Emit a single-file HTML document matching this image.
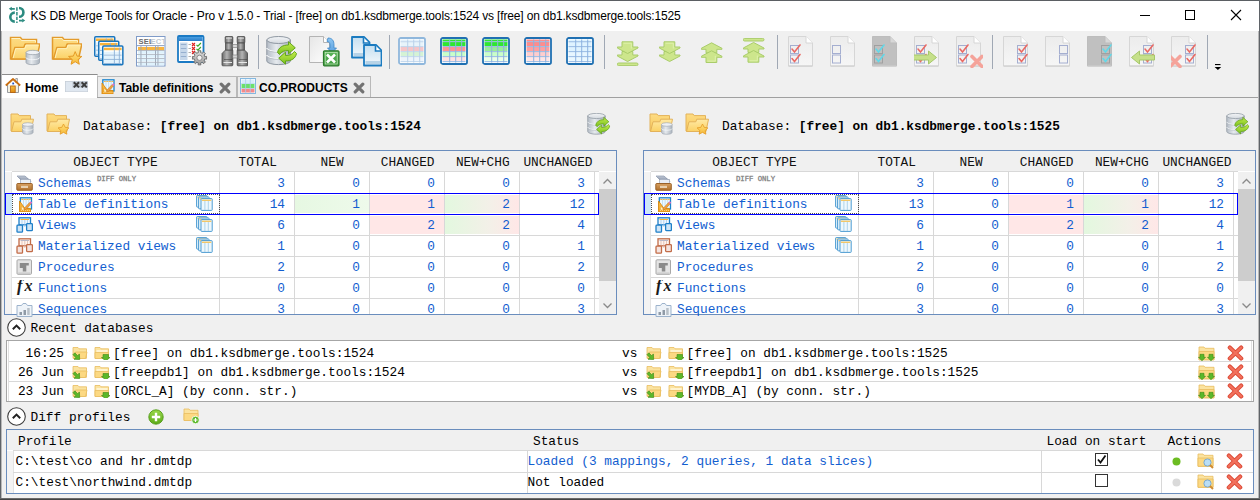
<!DOCTYPE html>
<html><head><meta charset="utf-8"><style>
html,body{margin:0;padding:0;}
body{width:1260px;height:500px;overflow:hidden;background:#f0f0f0;position:relative;font-family:"Liberation Sans",sans-serif;}
.t{position:absolute;white-space:pre;}
.r{position:absolute;}
</style></head><body>
<div class="r" style="left:0px;top:0px;width:1260px;height:31px;background:#ffffff;"></div>
<div class="t" style="left:30.5px;top:10.44px;font-family:'Liberation Sans', sans-serif;font-size:12px;line-height:13.406px;color:#000;-webkit-text-stroke:0;letter-spacing:-0.155px;">KS DB Merge Tools for Oracle - Pro v 1.5.0 - Trial - [free] on db1.ksdbmerge.tools:1524 vs [free] on db1.ksdbmerge.tools:1525</div>
<div class="r" style="left:1140px;top:15px;width:10px;height:1px;background:#000;"></div>
<div class="r" style="left:1185px;top:10px;width:10px;height:10px;background:transparent;border:1px solid #000;box-sizing:border-box;"></div>
<svg class="r" style="left:1230px;top:9px" width="12" height="12" viewBox="0 0 12 12"><path d="M1 1L11 11M11 1L1 11" stroke="#000" stroke-width="1.1"/></svg>
<div class="r" style="left:2px;top:74px;width:96px;height:24px;background:#ffffff;border-top:1px solid #8c8c8c;border-right:1px solid #d9d9d9;box-sizing:border-box;"></div>
<div class="r" style="left:97px;top:76px;width:140px;height:22px;background:#ececec;border:1px solid #b9b9b9;border-bottom:none;box-sizing:border-box;"></div>
<div class="r" style="left:237px;top:76px;width:134px;height:22px;background:#ececec;border:1px solid #b9b9b9;border-bottom:none;box-sizing:border-box;"></div>
<div class="r" style="left:97px;top:97px;width:1161px;height:1px;background:#a0a0a0;"></div>
<div class="t" style="left:25px;top:81.74px;font-family:'Liberation Sans', sans-serif;font-size:12px;line-height:13.406px;color:#000;-webkit-text-stroke:0;font-weight:700;">Home</div>
<div class="t" style="left:119px;top:81.74px;font-family:'Liberation Sans', sans-serif;font-size:12px;line-height:13.406px;color:#000;-webkit-text-stroke:0;font-weight:700;">Table definitions</div>
<div class="t" style="left:259px;top:81.74px;font-family:'Liberation Sans', sans-serif;font-size:12px;line-height:13.406px;color:#000;-webkit-text-stroke:0;font-weight:700;">CO.PRODUCTS</div>
<div class="r" style="left:4px;top:150px;width:613px;height:165px;background:#ffffff;border:1px solid #6a8dbd;box-sizing:border-box;"></div>
<div class="r" style="left:5px;top:151px;width:611px;height:20px;background:#f0f0f0;"></div>
<div class="r" style="left:12px;top:171px;width:587px;height:1px;background:#d8d8d8;"></div>
<div class="r" style="left:5px;top:172px;width:7px;height:142px;background:#f3f3f3;"></div>
<div class="r" style="left:11px;top:172px;width:1px;height:142px;background:#e3e3e3;"></div>
<div class="t" style="left:45.5px;width:140px;text-align:center;top:156.14px;font-family:'Liberation Mono', monospace;font-size:12.8px;line-height:14.500px;color:#111;">OBJECT TYPE</div>
<div class="t" style="left:187.7px;width:140px;text-align:center;top:156.14px;font-family:'Liberation Mono', monospace;font-size:12.8px;line-height:14.500px;color:#111;">TOTAL</div>
<div class="t" style="left:262.1px;width:140px;text-align:center;top:156.14px;font-family:'Liberation Mono', monospace;font-size:12.8px;line-height:14.500px;color:#111;">NEW</div>
<div class="t" style="left:337.7px;width:140px;text-align:center;top:156.14px;font-family:'Liberation Mono', monospace;font-size:12.8px;line-height:14.500px;color:#111;">CHANGED</div>
<div class="t" style="left:412.8px;width:140px;text-align:center;top:156.14px;font-family:'Liberation Mono', monospace;font-size:12.8px;line-height:14.500px;color:#111;">NEW+CHG</div>
<div class="t" style="left:488.0px;width:140px;text-align:center;top:156.14px;font-family:'Liberation Mono', monospace;font-size:12.8px;line-height:14.500px;color:#111;">UNCHANGED</div>
<div class="r" style="left:12px;top:193px;width:587px;height:1px;background:#d8d8d8;"></div>
<div class="r" style="left:12px;top:214px;width:587px;height:1px;background:#d8d8d8;"></div>
<div class="r" style="left:12px;top:235px;width:587px;height:1px;background:#d8d8d8;"></div>
<div class="r" style="left:12px;top:256px;width:587px;height:1px;background:#d8d8d8;"></div>
<div class="r" style="left:12px;top:277px;width:587px;height:1px;background:#d8d8d8;"></div>
<div class="r" style="left:12px;top:298px;width:587px;height:1px;background:#d8d8d8;"></div>
<div class="r" style="left:219px;top:172px;width:1px;height:142px;background:#d8d8d8;"></div>
<div class="r" style="left:294px;top:172px;width:1px;height:142px;background:#d8d8d8;"></div>
<div class="r" style="left:369px;top:172px;width:1px;height:142px;background:#d8d8d8;"></div>
<div class="r" style="left:444px;top:172px;width:1px;height:142px;background:#d8d8d8;"></div>
<div class="r" style="left:519px;top:172px;width:1px;height:142px;background:#d8d8d8;"></div>
<div class="r" style="left:594px;top:172px;width:1px;height:142px;background:#d8d8d8;"></div>
<div class="t" style="left:38px;top:177.34px;font-family:'Liberation Mono', monospace;font-size:12.8px;line-height:14.500px;color:#125ed0;">Schemas</div>
<div class="t" style="left:225px;width:60px;text-align:right;top:177.34px;font-family:'Liberation Mono', monospace;font-size:12.8px;line-height:14.500px;color:#125ed0;">3</div>
<div class="t" style="left:300px;width:60px;text-align:right;top:177.34px;font-family:'Liberation Mono', monospace;font-size:12.8px;line-height:14.500px;color:#125ed0;">0</div>
<div class="t" style="left:375px;width:60px;text-align:right;top:177.34px;font-family:'Liberation Mono', monospace;font-size:12.8px;line-height:14.500px;color:#125ed0;">0</div>
<div class="t" style="left:450px;width:60px;text-align:right;top:177.34px;font-family:'Liberation Mono', monospace;font-size:12.8px;line-height:14.500px;color:#125ed0;">0</div>
<div class="t" style="left:525px;width:60px;text-align:right;top:177.34px;font-family:'Liberation Mono', monospace;font-size:12.8px;line-height:14.500px;color:#125ed0;">3</div>
<div class="r" style="left:295px;top:195px;width:74px;height:18px;background:linear-gradient(90deg,#e6f8e2,#eefaeb);"></div>
<div class="r" style="left:370px;top:195px;width:74px;height:18px;background:#ffe7e7;"></div>
<div class="r" style="left:445px;top:195px;width:74px;height:18px;background:linear-gradient(90deg,#e3f8df,#f3f0e8 60%,#ffe7e7);"></div>
<div class="t" style="left:38px;top:198.34px;font-family:'Liberation Mono', monospace;font-size:12.8px;line-height:14.500px;color:#125ed0;">Table definitions</div>
<div class="t" style="left:225px;width:60px;text-align:right;top:198.34px;font-family:'Liberation Mono', monospace;font-size:12.8px;line-height:14.500px;color:#125ed0;">14</div>
<div class="t" style="left:300px;width:60px;text-align:right;top:198.34px;font-family:'Liberation Mono', monospace;font-size:12.8px;line-height:14.500px;color:#125ed0;">1</div>
<div class="t" style="left:375px;width:60px;text-align:right;top:198.34px;font-family:'Liberation Mono', monospace;font-size:12.8px;line-height:14.500px;color:#125ed0;">1</div>
<div class="t" style="left:450px;width:60px;text-align:right;top:198.34px;font-family:'Liberation Mono', monospace;font-size:12.8px;line-height:14.500px;color:#125ed0;">2</div>
<div class="t" style="left:525px;width:60px;text-align:right;top:198.34px;font-family:'Liberation Mono', monospace;font-size:12.8px;line-height:14.500px;color:#125ed0;">12</div>
<div class="r" style="left:370px;top:216px;width:74px;height:18px;background:#ffe7e7;"></div>
<div class="r" style="left:445px;top:216px;width:74px;height:18px;background:linear-gradient(90deg,#e3f8df,#f3f0e8 60%,#ffe7e7);"></div>
<div class="t" style="left:38px;top:219.34px;font-family:'Liberation Mono', monospace;font-size:12.8px;line-height:14.500px;color:#125ed0;">Views</div>
<div class="t" style="left:225px;width:60px;text-align:right;top:219.34px;font-family:'Liberation Mono', monospace;font-size:12.8px;line-height:14.500px;color:#125ed0;">6</div>
<div class="t" style="left:300px;width:60px;text-align:right;top:219.34px;font-family:'Liberation Mono', monospace;font-size:12.8px;line-height:14.500px;color:#125ed0;">0</div>
<div class="t" style="left:375px;width:60px;text-align:right;top:219.34px;font-family:'Liberation Mono', monospace;font-size:12.8px;line-height:14.500px;color:#125ed0;">2</div>
<div class="t" style="left:450px;width:60px;text-align:right;top:219.34px;font-family:'Liberation Mono', monospace;font-size:12.8px;line-height:14.500px;color:#125ed0;">2</div>
<div class="t" style="left:525px;width:60px;text-align:right;top:219.34px;font-family:'Liberation Mono', monospace;font-size:12.8px;line-height:14.500px;color:#125ed0;">4</div>
<div class="t" style="left:38px;top:240.34px;font-family:'Liberation Mono', monospace;font-size:12.8px;line-height:14.500px;color:#125ed0;">Materialized views</div>
<div class="t" style="left:225px;width:60px;text-align:right;top:240.34px;font-family:'Liberation Mono', monospace;font-size:12.8px;line-height:14.500px;color:#125ed0;">1</div>
<div class="t" style="left:300px;width:60px;text-align:right;top:240.34px;font-family:'Liberation Mono', monospace;font-size:12.8px;line-height:14.500px;color:#125ed0;">0</div>
<div class="t" style="left:375px;width:60px;text-align:right;top:240.34px;font-family:'Liberation Mono', monospace;font-size:12.8px;line-height:14.500px;color:#125ed0;">0</div>
<div class="t" style="left:450px;width:60px;text-align:right;top:240.34px;font-family:'Liberation Mono', monospace;font-size:12.8px;line-height:14.500px;color:#125ed0;">0</div>
<div class="t" style="left:525px;width:60px;text-align:right;top:240.34px;font-family:'Liberation Mono', monospace;font-size:12.8px;line-height:14.500px;color:#125ed0;">1</div>
<div class="t" style="left:38px;top:261.34px;font-family:'Liberation Mono', monospace;font-size:12.8px;line-height:14.500px;color:#125ed0;">Procedures</div>
<div class="t" style="left:225px;width:60px;text-align:right;top:261.34px;font-family:'Liberation Mono', monospace;font-size:12.8px;line-height:14.500px;color:#125ed0;">2</div>
<div class="t" style="left:300px;width:60px;text-align:right;top:261.34px;font-family:'Liberation Mono', monospace;font-size:12.8px;line-height:14.500px;color:#125ed0;">0</div>
<div class="t" style="left:375px;width:60px;text-align:right;top:261.34px;font-family:'Liberation Mono', monospace;font-size:12.8px;line-height:14.500px;color:#125ed0;">0</div>
<div class="t" style="left:450px;width:60px;text-align:right;top:261.34px;font-family:'Liberation Mono', monospace;font-size:12.8px;line-height:14.500px;color:#125ed0;">0</div>
<div class="t" style="left:525px;width:60px;text-align:right;top:261.34px;font-family:'Liberation Mono', monospace;font-size:12.8px;line-height:14.500px;color:#125ed0;">2</div>
<div class="t" style="left:38px;top:282.34px;font-family:'Liberation Mono', monospace;font-size:12.8px;line-height:14.500px;color:#125ed0;">Functions</div>
<div class="t" style="left:225px;width:60px;text-align:right;top:282.34px;font-family:'Liberation Mono', monospace;font-size:12.8px;line-height:14.500px;color:#125ed0;">0</div>
<div class="t" style="left:300px;width:60px;text-align:right;top:282.34px;font-family:'Liberation Mono', monospace;font-size:12.8px;line-height:14.500px;color:#125ed0;">0</div>
<div class="t" style="left:375px;width:60px;text-align:right;top:282.34px;font-family:'Liberation Mono', monospace;font-size:12.8px;line-height:14.500px;color:#125ed0;">0</div>
<div class="t" style="left:450px;width:60px;text-align:right;top:282.34px;font-family:'Liberation Mono', monospace;font-size:12.8px;line-height:14.500px;color:#125ed0;">0</div>
<div class="t" style="left:525px;width:60px;text-align:right;top:282.34px;font-family:'Liberation Mono', monospace;font-size:12.8px;line-height:14.500px;color:#125ed0;">0</div>
<div class="t" style="left:38px;top:303.34px;font-family:'Liberation Mono', monospace;font-size:12.8px;line-height:14.500px;color:#125ed0;">Sequences</div>
<div class="t" style="left:225px;width:60px;text-align:right;top:303.34px;font-family:'Liberation Mono', monospace;font-size:12.8px;line-height:14.500px;color:#125ed0;">3</div>
<div class="t" style="left:300px;width:60px;text-align:right;top:303.34px;font-family:'Liberation Mono', monospace;font-size:12.8px;line-height:14.500px;color:#125ed0;">0</div>
<div class="t" style="left:375px;width:60px;text-align:right;top:303.34px;font-family:'Liberation Mono', monospace;font-size:12.8px;line-height:14.500px;color:#125ed0;">0</div>
<div class="t" style="left:450px;width:60px;text-align:right;top:303.34px;font-family:'Liberation Mono', monospace;font-size:12.8px;line-height:14.500px;color:#125ed0;">0</div>
<div class="t" style="left:525px;width:60px;text-align:right;top:303.34px;font-family:'Liberation Mono', monospace;font-size:12.8px;line-height:14.500px;color:#125ed0;">3</div>
<div class="r" style="left:5px;top:194px;width:7px;height:20px;background:#cde6f7;"></div>
<div class="r" style="left:12px;top:194px;width:208px;height:20px;background:transparent;border:1px dotted #505050;box-sizing:border-box;"></div>
<div class="r" style="left:5px;top:193px;width:594px;height:22px;background:transparent;border:1px solid #0000ff;box-sizing:border-box;"></div>
<div class="r" style="left:599px;top:172px;width:17px;height:142px;background:#f0f0f0;"></div>
<div class="r" style="left:599px;top:189px;width:17px;height:92px;background:#cdcdcd;"></div>
<svg class="r" style="left:599px;top:177px" width="17" height="8" viewBox="0 0 17 8"><path d="M4.5 6.5l4-4 4 4" fill="none" stroke="#8a8a8a" stroke-width="1.3"/></svg>
<svg class="r" style="left:599px;top:302px" width="17" height="8" viewBox="0 0 17 8"><path d="M4.5 1.5l4 4 4-4" fill="none" stroke="#8a8a8a" stroke-width="1.3"/></svg>
<div class="r" style="left:643px;top:150px;width:613px;height:165px;background:#ffffff;border:1px solid #6a8dbd;box-sizing:border-box;"></div>
<div class="r" style="left:644px;top:151px;width:611px;height:20px;background:#f0f0f0;"></div>
<div class="r" style="left:651px;top:171px;width:587px;height:1px;background:#d8d8d8;"></div>
<div class="r" style="left:644px;top:172px;width:7px;height:142px;background:#f3f3f3;"></div>
<div class="r" style="left:650px;top:172px;width:1px;height:142px;background:#e3e3e3;"></div>
<div class="t" style="left:684.5px;width:140px;text-align:center;top:156.14px;font-family:'Liberation Mono', monospace;font-size:12.8px;line-height:14.500px;color:#111;">OBJECT TYPE</div>
<div class="t" style="left:826.7px;width:140px;text-align:center;top:156.14px;font-family:'Liberation Mono', monospace;font-size:12.8px;line-height:14.500px;color:#111;">TOTAL</div>
<div class="t" style="left:901.1px;width:140px;text-align:center;top:156.14px;font-family:'Liberation Mono', monospace;font-size:12.8px;line-height:14.500px;color:#111;">NEW</div>
<div class="t" style="left:976.7px;width:140px;text-align:center;top:156.14px;font-family:'Liberation Mono', monospace;font-size:12.8px;line-height:14.500px;color:#111;">CHANGED</div>
<div class="t" style="left:1051.8px;width:140px;text-align:center;top:156.14px;font-family:'Liberation Mono', monospace;font-size:12.8px;line-height:14.500px;color:#111;">NEW+CHG</div>
<div class="t" style="left:1127.0px;width:140px;text-align:center;top:156.14px;font-family:'Liberation Mono', monospace;font-size:12.8px;line-height:14.500px;color:#111;">UNCHANGED</div>
<div class="r" style="left:651px;top:193px;width:587px;height:1px;background:#d8d8d8;"></div>
<div class="r" style="left:651px;top:214px;width:587px;height:1px;background:#d8d8d8;"></div>
<div class="r" style="left:651px;top:235px;width:587px;height:1px;background:#d8d8d8;"></div>
<div class="r" style="left:651px;top:256px;width:587px;height:1px;background:#d8d8d8;"></div>
<div class="r" style="left:651px;top:277px;width:587px;height:1px;background:#d8d8d8;"></div>
<div class="r" style="left:651px;top:298px;width:587px;height:1px;background:#d8d8d8;"></div>
<div class="r" style="left:858px;top:172px;width:1px;height:142px;background:#d8d8d8;"></div>
<div class="r" style="left:933px;top:172px;width:1px;height:142px;background:#d8d8d8;"></div>
<div class="r" style="left:1008px;top:172px;width:1px;height:142px;background:#d8d8d8;"></div>
<div class="r" style="left:1083px;top:172px;width:1px;height:142px;background:#d8d8d8;"></div>
<div class="r" style="left:1158px;top:172px;width:1px;height:142px;background:#d8d8d8;"></div>
<div class="r" style="left:1233px;top:172px;width:1px;height:142px;background:#d8d8d8;"></div>
<div class="t" style="left:677px;top:177.34px;font-family:'Liberation Mono', monospace;font-size:12.8px;line-height:14.500px;color:#125ed0;">Schemas</div>
<div class="t" style="left:864px;width:60px;text-align:right;top:177.34px;font-family:'Liberation Mono', monospace;font-size:12.8px;line-height:14.500px;color:#125ed0;">3</div>
<div class="t" style="left:939px;width:60px;text-align:right;top:177.34px;font-family:'Liberation Mono', monospace;font-size:12.8px;line-height:14.500px;color:#125ed0;">0</div>
<div class="t" style="left:1014px;width:60px;text-align:right;top:177.34px;font-family:'Liberation Mono', monospace;font-size:12.8px;line-height:14.500px;color:#125ed0;">0</div>
<div class="t" style="left:1089px;width:60px;text-align:right;top:177.34px;font-family:'Liberation Mono', monospace;font-size:12.8px;line-height:14.500px;color:#125ed0;">0</div>
<div class="t" style="left:1164px;width:60px;text-align:right;top:177.34px;font-family:'Liberation Mono', monospace;font-size:12.8px;line-height:14.500px;color:#125ed0;">3</div>
<div class="r" style="left:1009px;top:195px;width:74px;height:18px;background:#ffe7e7;"></div>
<div class="r" style="left:1084px;top:195px;width:74px;height:18px;background:linear-gradient(90deg,#e3f8df,#f3f0e8 60%,#ffe7e7);"></div>
<div class="t" style="left:677px;top:198.34px;font-family:'Liberation Mono', monospace;font-size:12.8px;line-height:14.500px;color:#125ed0;">Table definitions</div>
<div class="t" style="left:864px;width:60px;text-align:right;top:198.34px;font-family:'Liberation Mono', monospace;font-size:12.8px;line-height:14.500px;color:#125ed0;">13</div>
<div class="t" style="left:939px;width:60px;text-align:right;top:198.34px;font-family:'Liberation Mono', monospace;font-size:12.8px;line-height:14.500px;color:#125ed0;">0</div>
<div class="t" style="left:1014px;width:60px;text-align:right;top:198.34px;font-family:'Liberation Mono', monospace;font-size:12.8px;line-height:14.500px;color:#125ed0;">1</div>
<div class="t" style="left:1089px;width:60px;text-align:right;top:198.34px;font-family:'Liberation Mono', monospace;font-size:12.8px;line-height:14.500px;color:#125ed0;">1</div>
<div class="t" style="left:1164px;width:60px;text-align:right;top:198.34px;font-family:'Liberation Mono', monospace;font-size:12.8px;line-height:14.500px;color:#125ed0;">12</div>
<div class="r" style="left:1009px;top:216px;width:74px;height:18px;background:#ffe7e7;"></div>
<div class="r" style="left:1084px;top:216px;width:74px;height:18px;background:linear-gradient(90deg,#e3f8df,#f3f0e8 60%,#ffe7e7);"></div>
<div class="t" style="left:677px;top:219.34px;font-family:'Liberation Mono', monospace;font-size:12.8px;line-height:14.500px;color:#125ed0;">Views</div>
<div class="t" style="left:864px;width:60px;text-align:right;top:219.34px;font-family:'Liberation Mono', monospace;font-size:12.8px;line-height:14.500px;color:#125ed0;">6</div>
<div class="t" style="left:939px;width:60px;text-align:right;top:219.34px;font-family:'Liberation Mono', monospace;font-size:12.8px;line-height:14.500px;color:#125ed0;">0</div>
<div class="t" style="left:1014px;width:60px;text-align:right;top:219.34px;font-family:'Liberation Mono', monospace;font-size:12.8px;line-height:14.500px;color:#125ed0;">2</div>
<div class="t" style="left:1089px;width:60px;text-align:right;top:219.34px;font-family:'Liberation Mono', monospace;font-size:12.8px;line-height:14.500px;color:#125ed0;">2</div>
<div class="t" style="left:1164px;width:60px;text-align:right;top:219.34px;font-family:'Liberation Mono', monospace;font-size:12.8px;line-height:14.500px;color:#125ed0;">4</div>
<div class="t" style="left:677px;top:240.34px;font-family:'Liberation Mono', monospace;font-size:12.8px;line-height:14.500px;color:#125ed0;">Materialized views</div>
<div class="t" style="left:864px;width:60px;text-align:right;top:240.34px;font-family:'Liberation Mono', monospace;font-size:12.8px;line-height:14.500px;color:#125ed0;">1</div>
<div class="t" style="left:939px;width:60px;text-align:right;top:240.34px;font-family:'Liberation Mono', monospace;font-size:12.8px;line-height:14.500px;color:#125ed0;">0</div>
<div class="t" style="left:1014px;width:60px;text-align:right;top:240.34px;font-family:'Liberation Mono', monospace;font-size:12.8px;line-height:14.500px;color:#125ed0;">0</div>
<div class="t" style="left:1089px;width:60px;text-align:right;top:240.34px;font-family:'Liberation Mono', monospace;font-size:12.8px;line-height:14.500px;color:#125ed0;">0</div>
<div class="t" style="left:1164px;width:60px;text-align:right;top:240.34px;font-family:'Liberation Mono', monospace;font-size:12.8px;line-height:14.500px;color:#125ed0;">1</div>
<div class="t" style="left:677px;top:261.34px;font-family:'Liberation Mono', monospace;font-size:12.8px;line-height:14.500px;color:#125ed0;">Procedures</div>
<div class="t" style="left:864px;width:60px;text-align:right;top:261.34px;font-family:'Liberation Mono', monospace;font-size:12.8px;line-height:14.500px;color:#125ed0;">2</div>
<div class="t" style="left:939px;width:60px;text-align:right;top:261.34px;font-family:'Liberation Mono', monospace;font-size:12.8px;line-height:14.500px;color:#125ed0;">0</div>
<div class="t" style="left:1014px;width:60px;text-align:right;top:261.34px;font-family:'Liberation Mono', monospace;font-size:12.8px;line-height:14.500px;color:#125ed0;">0</div>
<div class="t" style="left:1089px;width:60px;text-align:right;top:261.34px;font-family:'Liberation Mono', monospace;font-size:12.8px;line-height:14.500px;color:#125ed0;">0</div>
<div class="t" style="left:1164px;width:60px;text-align:right;top:261.34px;font-family:'Liberation Mono', monospace;font-size:12.8px;line-height:14.500px;color:#125ed0;">2</div>
<div class="t" style="left:677px;top:282.34px;font-family:'Liberation Mono', monospace;font-size:12.8px;line-height:14.500px;color:#125ed0;">Functions</div>
<div class="t" style="left:864px;width:60px;text-align:right;top:282.34px;font-family:'Liberation Mono', monospace;font-size:12.8px;line-height:14.500px;color:#125ed0;">0</div>
<div class="t" style="left:939px;width:60px;text-align:right;top:282.34px;font-family:'Liberation Mono', monospace;font-size:12.8px;line-height:14.500px;color:#125ed0;">0</div>
<div class="t" style="left:1014px;width:60px;text-align:right;top:282.34px;font-family:'Liberation Mono', monospace;font-size:12.8px;line-height:14.500px;color:#125ed0;">0</div>
<div class="t" style="left:1089px;width:60px;text-align:right;top:282.34px;font-family:'Liberation Mono', monospace;font-size:12.8px;line-height:14.500px;color:#125ed0;">0</div>
<div class="t" style="left:1164px;width:60px;text-align:right;top:282.34px;font-family:'Liberation Mono', monospace;font-size:12.8px;line-height:14.500px;color:#125ed0;">0</div>
<div class="t" style="left:677px;top:303.34px;font-family:'Liberation Mono', monospace;font-size:12.8px;line-height:14.500px;color:#125ed0;">Sequences</div>
<div class="t" style="left:864px;width:60px;text-align:right;top:303.34px;font-family:'Liberation Mono', monospace;font-size:12.8px;line-height:14.500px;color:#125ed0;">3</div>
<div class="t" style="left:939px;width:60px;text-align:right;top:303.34px;font-family:'Liberation Mono', monospace;font-size:12.8px;line-height:14.500px;color:#125ed0;">0</div>
<div class="t" style="left:1014px;width:60px;text-align:right;top:303.34px;font-family:'Liberation Mono', monospace;font-size:12.8px;line-height:14.500px;color:#125ed0;">0</div>
<div class="t" style="left:1089px;width:60px;text-align:right;top:303.34px;font-family:'Liberation Mono', monospace;font-size:12.8px;line-height:14.500px;color:#125ed0;">0</div>
<div class="t" style="left:1164px;width:60px;text-align:right;top:303.34px;font-family:'Liberation Mono', monospace;font-size:12.8px;line-height:14.500px;color:#125ed0;">3</div>
<div class="r" style="left:644px;top:194px;width:7px;height:20px;background:#cde6f7;"></div>
<div class="r" style="left:651px;top:194px;width:208px;height:20px;background:transparent;border:1px dotted #505050;box-sizing:border-box;"></div>
<div class="r" style="left:644px;top:193px;width:594px;height:22px;background:transparent;border:1px solid #0000ff;box-sizing:border-box;"></div>
<div class="r" style="left:1238px;top:172px;width:17px;height:142px;background:#f0f0f0;"></div>
<div class="r" style="left:1238px;top:189px;width:17px;height:92px;background:#cdcdcd;"></div>
<svg class="r" style="left:1238px;top:177px" width="17" height="8" viewBox="0 0 17 8"><path d="M4.5 6.5l4-4 4 4" fill="none" stroke="#8a8a8a" stroke-width="1.3"/></svg>
<svg class="r" style="left:1238px;top:302px" width="17" height="8" viewBox="0 0 17 8"><path d="M4.5 1.5l4 4 4-4" fill="none" stroke="#8a8a8a" stroke-width="1.3"/></svg>
<div class="t" style="left:83px;top:120.04px;font-family:'Liberation Mono', monospace;font-size:12.8px;line-height:14.500px;color:#000;">Database:</div>
<div class="t" style="left:159.8px;top:120.04px;font-family:'Liberation Mono', monospace;font-size:12.8px;line-height:14.500px;color:#000;font-weight:700;-webkit-text-stroke:0;">[free] on db1.ksdbmerge.tools:1524</div>
<div class="t" style="left:722px;top:120.04px;font-family:'Liberation Mono', monospace;font-size:12.8px;line-height:14.500px;color:#000;">Database:</div>
<div class="t" style="left:798.8px;top:120.04px;font-family:'Liberation Mono', monospace;font-size:12.8px;line-height:14.500px;color:#000;font-weight:700;-webkit-text-stroke:0;">[free] on db1.ksdbmerge.tools:1525</div>
<div class="t" style="left:30.5px;top:322.34px;font-family:'Liberation Mono', monospace;font-size:12.8px;line-height:14.500px;color:#000;">Recent databases</div>
<div class="r" style="left:6px;top:340px;width:1248px;height:62px;background:#ffffff;border:1px solid #a6a6a6;box-sizing:border-box;"></div>
<div class="r" style="left:8px;top:341px;width:1px;height:60px;background:#e0e0e0;"></div>
<div class="r" style="left:1251px;top:341px;width:1px;height:60px;background:#e0e0e0;"></div>
<div class="r" style="left:9px;top:361px;width:1242px;height:1px;background:#d8d8d8;"></div>
<div class="r" style="left:9px;top:381px;width:1242px;height:1px;background:#d8d8d8;"></div>
<div class="t" style="left:4px;width:60px;text-align:right;top:347.34px;font-family:'Liberation Mono', monospace;font-size:12.8px;line-height:14.500px;color:#000;">16:25</div>
<div class="t" style="left:113px;top:347.34px;font-family:'Liberation Mono', monospace;font-size:12.8px;line-height:14.500px;color:#000;">[free] on db1.ksdbmerge.tools:1524</div>
<div class="t" style="left:622px;top:347.34px;font-family:'Liberation Mono', monospace;font-size:12.8px;line-height:14.500px;color:#000;">vs</div>
<div class="t" style="left:686.5px;top:347.34px;font-family:'Liberation Mono', monospace;font-size:12.8px;line-height:14.500px;color:#000;">[free] on db1.ksdbmerge.tools:1525</div>
<div class="t" style="left:4px;width:60px;text-align:right;top:366.34px;font-family:'Liberation Mono', monospace;font-size:12.8px;line-height:14.500px;color:#000;">26 Jun</div>
<div class="t" style="left:113px;top:366.34px;font-family:'Liberation Mono', monospace;font-size:12.8px;line-height:14.500px;color:#000;">[freepdb1] on db1.ksdbmerge.tools:1524</div>
<div class="t" style="left:622px;top:366.34px;font-family:'Liberation Mono', monospace;font-size:12.8px;line-height:14.500px;color:#000;">vs</div>
<div class="t" style="left:686.5px;top:366.34px;font-family:'Liberation Mono', monospace;font-size:12.8px;line-height:14.500px;color:#000;">[freepdb1] on db1.ksdbmerge.tools:1525</div>
<div class="t" style="left:4px;width:60px;text-align:right;top:385.34px;font-family:'Liberation Mono', monospace;font-size:12.8px;line-height:14.500px;color:#000;">23 Jun</div>
<div class="t" style="left:113px;top:385.34px;font-family:'Liberation Mono', monospace;font-size:12.8px;line-height:14.500px;color:#000;">[ORCL_A] (by conn. str.)</div>
<div class="t" style="left:622px;top:385.34px;font-family:'Liberation Mono', monospace;font-size:12.8px;line-height:14.500px;color:#000;">vs</div>
<div class="t" style="left:686.5px;top:385.34px;font-family:'Liberation Mono', monospace;font-size:12.8px;line-height:14.500px;color:#000;">[MYDB_A] (by conn. str.)</div>
<div class="t" style="left:30.5px;top:410.64px;font-family:'Liberation Mono', monospace;font-size:12.8px;line-height:14.500px;color:#000;">Diff profiles</div>
<div class="r" style="left:6px;top:429px;width:1248px;height:65px;background:#ffffff;border:1px solid #6a8dbd;box-sizing:border-box;"></div>
<div class="r" style="left:7px;top:430px;width:1246px;height:20px;background:#f0f0f0;"></div>
<div class="r" style="left:13px;top:450px;width:1240px;height:1px;background:#d8d8d8;"></div>
<div class="r" style="left:7px;top:451px;width:6px;height:42px;background:#f3f3f3;"></div>
<div class="r" style="left:13px;top:451px;width:1px;height:42px;background:#e2e2e2;"></div>
<div class="r" style="left:13px;top:472px;width:1240px;height:1px;background:#d8d8d8;"></div>
<div class="r" style="left:527px;top:451px;width:1px;height:42px;background:#d8d8d8;"></div>
<div class="r" style="left:1041px;top:451px;width:1px;height:42px;background:#d8d8d8;"></div>
<div class="r" style="left:1161px;top:451px;width:1px;height:42px;background:#d8d8d8;"></div>
<div class="t" style="left:18px;top:434.94px;font-family:'Liberation Mono', monospace;font-size:12.8px;line-height:14.500px;color:#000;">Profile</div>
<div class="t" style="left:533px;top:434.94px;font-family:'Liberation Mono', monospace;font-size:12.8px;line-height:14.500px;color:#000;">Status</div>
<div class="t" style="left:1046.5px;top:434.94px;font-family:'Liberation Mono', monospace;font-size:12.8px;line-height:14.500px;color:#000;">Load on start</div>
<div class="t" style="left:1167.5px;top:434.94px;font-family:'Liberation Mono', monospace;font-size:12.8px;line-height:14.500px;color:#000;">Actions</div>
<div class="t" style="left:15.5px;top:454.94px;font-family:'Liberation Mono', monospace;font-size:12.8px;line-height:14.500px;color:#000;">C:\test\co and hr.dmtdp</div>
<div class="t" style="left:15.5px;top:475.94px;font-family:'Liberation Mono', monospace;font-size:12.8px;line-height:14.500px;color:#000;">C:\test\northwind.dmtdp</div>
<div class="t" style="left:527.5px;top:454.94px;font-family:'Liberation Mono', monospace;font-size:12.8px;line-height:14.500px;color:#125ed0;">Loaded (3 mappings, 2 queries, 1 data slices)</div>
<div class="t" style="left:527.5px;top:475.94px;font-family:'Liberation Mono', monospace;font-size:12.8px;line-height:14.500px;color:#000;">Not loaded</div>
<svg width="0" height="0" style="position:absolute"><defs>
<linearGradient id="gFoldB" x1="0" y1="0" x2="0" y2="1"><stop offset="0" stop-color="#fddc84"/><stop offset="1" stop-color="#f9c95a"/></linearGradient>
<linearGradient id="gFoldF" x1="0" y1="0" x2="0" y2="1"><stop offset="0" stop-color="#ffeaa6"/><stop offset="1" stop-color="#fbd165"/></linearGradient>
<linearGradient id="gDb" x1="0" y1="0" x2="1" y2="0"><stop offset="0" stop-color="#b4bcc6"/><stop offset="0.4" stop-color="#e6eaee"/><stop offset="1" stop-color="#a9b2bc"/></linearGradient>
<linearGradient id="gDbTop" x1="0" y1="0" x2="0" y2="1"><stop offset="0" stop-color="#f3f5f7"/><stop offset="1" stop-color="#d4d9df"/></linearGradient>
<linearGradient id="gStar" x1="0" y1="0" x2="0" y2="1"><stop offset="0" stop-color="#ffe27a"/><stop offset="1" stop-color="#f6b83a"/></linearGradient>
<linearGradient id="gWinT" x1="0" y1="0" x2="0" y2="1"><stop offset="0" stop-color="#4a9ee0"/><stop offset="1" stop-color="#2a7cc8"/></linearGradient>
<linearGradient id="gGear" x1="0" y1="0" x2="0" y2="1"><stop offset="0" stop-color="#dedede"/><stop offset="1" stop-color="#9a9a9a"/></linearGradient>
<linearGradient id="gBin" x1="0" y1="0" x2="1" y2="0"><stop offset="0" stop-color="#6a6a6a"/><stop offset="0.45" stop-color="#b4b4b4"/><stop offset="1" stop-color="#5a5a5a"/></linearGradient>
<linearGradient id="gGreen" x1="0" y1="0" x2="0" y2="1"><stop offset="0" stop-color="#c4ec4a"/><stop offset="1" stop-color="#78c020"/></linearGradient>
<linearGradient id="gDoc" x1="0" y1="0" x2="1" y2="1"><stop offset="0" stop-color="#e6e6e6"/><stop offset="1" stop-color="#ffffff"/></linearGradient>
<linearGradient id="gBlueArr" x1="0" y1="0" x2="0" y2="1"><stop offset="0" stop-color="#8cc4f0"/><stop offset="1" stop-color="#5aa0e0"/></linearGradient>
<linearGradient id="gXl" x1="0" y1="0" x2="0" y2="1"><stop offset="0" stop-color="#5cb85c"/><stop offset="1" stop-color="#3e9a3e"/></linearGradient>
<linearGradient id="gBDoc" x1="0" y1="0" x2="0" y2="1"><stop offset="0" stop-color="#c5dff0"/><stop offset="1" stop-color="#f4f9fc"/></linearGradient>
<linearGradient id="gCDoc" x1="0" y1="0" x2="0" y2="1"><stop offset="0" stop-color="#ececec"/><stop offset="1" stop-color="#f6f6f6"/></linearGradient>
<linearGradient id="gDoor" x1="0" y1="0" x2="0" y2="1"><stop offset="0" stop-color="#f8c040"/><stop offset="1" stop-color="#e08a10"/></linearGradient>
<linearGradient id="gBrown" x1="0" y1="0" x2="0" y2="1"><stop offset="0" stop-color="#d8a060"/><stop offset="1" stop-color="#b0702c"/></linearGradient>
<linearGradient id="gSq" x1="0" y1="0" x2="0" y2="1"><stop offset="0" stop-color="#fbc048"/><stop offset="1" stop-color="#f0a020"/></linearGradient>
<linearGradient id="gPlus" x1="0" y1="0" x2="0" y2="1"><stop offset="0" stop-color="#9ad84a"/><stop offset="1" stop-color="#5aaa18"/></linearGradient>
<symbol id="foldDb" viewBox="0 0 32 32">
<path d="M2.5 1.5h10l1.5 2h14.5v19.5h-26z" fill="url(#gFoldB)" stroke="#e39b2c" stroke-width="1.5"/>
<path d="M3.5 2.5h8.5l1.5 2h14v2" fill="none" stroke="#fff6cf" stroke-width="0.9"/>
<path d="M3.5 23L6.8 11.6h9l1.3-3.6h14.8L28.5 23z" fill="url(#gFoldF)" stroke="#e39b2c" stroke-width="1.5" stroke-linejoin="round"/>
<path d="M5.2 22L7.6 12.6h9.2l1.3-3.6h12.4" fill="none" stroke="#fff3c0" stroke-width="0.9"/>

<path d="M18 16.5v10a6.8 2.2 0 0 0 13.6 0v-10z" fill="url(#gDb)" stroke="#9aa3ad" stroke-width="0.8"/>
<ellipse cx="24.8" cy="16.5" rx="6.8" ry="2.2" fill="#eef1f4" stroke="#9aa3ad" stroke-width="0.8"/>
<path d="M18 21.5a6.8 2.2 0 0 0 13.6 0" fill="none" stroke="#f5f7f9" stroke-width="0.9"/>
</symbol><symbol id="foldStar" viewBox="0 0 32 32">
<path d="M2.5 1.5h10l1.5 2h14.5v19.5h-26z" fill="url(#gFoldB)" stroke="#e39b2c" stroke-width="1.5"/>
<path d="M3.5 2.5h8.5l1.5 2h14v2" fill="none" stroke="#fff6cf" stroke-width="0.9"/>
<path d="M3.5 23L6.8 11.6h9l1.3-3.6h14.8L28.5 23z" fill="url(#gFoldF)" stroke="#e39b2c" stroke-width="1.5" stroke-linejoin="round"/>
<path d="M5.2 22L7.6 12.6h9.2l1.3-3.6h12.4" fill="none" stroke="#fff3c0" stroke-width="0.9"/>
<path d="M25.20 15.60 L27.02 20.09 L31.86 20.44 L28.15 23.56 L29.31 28.26 L25.20 25.70 L21.09 28.26 L22.25 23.56 L18.54 20.44 L23.38 20.09Z" fill="url(#gStar)" stroke="#e59a25" stroke-width="1" stroke-linejoin="round"/></symbol><symbol id="tables3" viewBox="0 0 36 32"><rect x="6.75" y="0.75" width="20.0" height="19.5" fill="#fff" stroke="#1b76bd" stroke-width="1.5" rx="1"/><rect x="8" y="2.5" width="17.5" height="2.5" fill="#f9b43a"/><rect x="8" y="6.5" width="17.5" height="3" fill="#e3f3fd"/><rect x="8" y="9.5" width="17.5" height="0.9" fill="#8bb0d6"/><rect x="8" y="10.7" width="17.5" height="3" fill="#e3f3fd"/><rect x="8" y="13.7" width="17.5" height="0.9" fill="#8bb0d6"/><rect x="8" y="14.9" width="17.5" height="3" fill="#e3f3fd"/><rect x="8" y="17.9" width="17.5" height="0.9" fill="#8bb0d6"/><rect x="17.825000000000003" y="2.5" width="0.9" height="17" fill="#8bb0d6"/><rect x="22.77" y="2.5" width="0.9" height="17" fill="#8bb0d6"/><rect x="10.75" y="5.15" width="20.0" height="19.0" fill="#fff" stroke="#1b76bd" stroke-width="1.5" rx="1"/><rect x="12" y="6.9" width="17.5" height="2.5" fill="#f9b43a"/><rect x="12" y="10.9" width="17.5" height="3" fill="#e3f3fd"/><rect x="12" y="13.9" width="17.5" height="0.9" fill="#8bb0d6"/><rect x="12" y="15.100000000000001" width="17.5" height="3" fill="#e3f3fd"/><rect x="12" y="18.1" width="17.5" height="0.9" fill="#8bb0d6"/><rect x="12" y="19.3" width="17.5" height="3" fill="#e3f3fd"/><rect x="12" y="22.3" width="17.5" height="0.9" fill="#8bb0d6"/><rect x="21.825000000000003" y="6.9" width="0.9" height="16.5" fill="#8bb0d6"/><rect x="26.77" y="6.9" width="0.9" height="16.5" fill="#8bb0d6"/><rect x="14.75" y="9.95" width="20.1" height="18.9" fill="#fff" stroke="#1b76bd" stroke-width="1.5" rx="1"/><rect x="16" y="11.7" width="17.6" height="2.5" fill="#f9b43a"/><rect x="16" y="15.7" width="17.6" height="3" fill="#e3f3fd"/><rect x="16" y="18.7" width="17.6" height="0.9" fill="#8bb0d6"/><rect x="16" y="19.9" width="17.6" height="3" fill="#e3f3fd"/><rect x="16" y="22.9" width="17.6" height="0.9" fill="#8bb0d6"/><rect x="16" y="24.1" width="17.6" height="3" fill="#e3f3fd"/><rect x="16" y="27.1" width="17.6" height="0.9" fill="#8bb0d6"/><rect x="25.880000000000003" y="11.7" width="0.9" height="16.4" fill="#8bb0d6"/><rect x="30.848000000000003" y="11.7" width="0.9" height="16.4" fill="#8bb0d6"/></symbol><symbol id="selTable" viewBox="0 0 30 31"><rect x="0.5" y="0.5" width="28.5" height="29.5" fill="#fff" stroke="#7f9bc8" stroke-width="1"/><text x="2.5" y="7.6" font-family="Liberation Sans" font-weight="700" font-size="7.6" fill="#6a6a6a" letter-spacing="0.2">SEL</text><text x="14.6" y="7.6" font-family="Liberation Sans" font-weight="700" font-size="7.6" fill="#c0c8d0" letter-spacing="0.2">ECT</text><rect x="1" y="9.2" width="27.5" height="0.9" fill="#8095b8"/><rect x="2" y="11" width="26" height="3.2" fill="#f8b440"/><rect x="2" y="15.0" width="26" height="2.8" fill="#dff2fc"/><rect x="2" y="18.9" width="26" height="2.8" fill="#dff2fc"/><rect x="2" y="22.8" width="26" height="2.8" fill="#dff2fc"/><rect x="2" y="26.7" width="26" height="2.8" fill="#dff2fc"/><rect x="4.5" y="10" width="0.9" height="19.5" fill="#9aa4b4"/><rect x="10" y="10" width="0.9" height="19.5" fill="#9aa4b4"/><rect x="19" y="10" width="0.9" height="19.5" fill="#9aa4b4"/><rect x="21.5" y="10" width="0.9" height="19.5" fill="#9aa4b4"/><rect x="1" y="14.2" width="27.5" height="0.8" fill="#a8b0bc"/><rect x="1" y="18.099999999999998" width="27.5" height="0.8" fill="#a8b0bc"/><rect x="1" y="22.0" width="27.5" height="0.8" fill="#a8b0bc"/><rect x="1" y="25.9" width="27.5" height="0.8" fill="#a8b0bc"/></symbol><symbol id="winGear" viewBox="0 0 32 32"><rect x="1" y="1" width="25.5" height="26" fill="#fff" stroke="#1b7ac4" stroke-width="1.8" rx="1"/><rect x="2" y="2" width="23.5" height="4" fill="url(#gWinT)"/><rect x="3" y="7.5" width="7.5" height="17.5" fill="#c6d7ea"/><rect x="3.8" y="9" width="5.5" height="0.8" fill="#8aa6c8"/><rect x="11.5" y="9" width="2.5" height="0.8" fill="#9a9a9a"/><rect x="3.8" y="13" width="5.5" height="0.8" fill="#8aa6c8"/><rect x="11.5" y="13" width="2.5" height="0.8" fill="#9a9a9a"/><rect x="3.8" y="17" width="5.5" height="0.8" fill="#8aa6c8"/><rect x="11.5" y="17" width="2.5" height="0.8" fill="#9a9a9a"/><rect x="3.8" y="21" width="5.5" height="0.8" fill="#8aa6c8"/><rect x="11.5" y="21" width="2.5" height="0.8" fill="#9a9a9a"/><path d="M15 8l3 3M18 8l-3 3" stroke="#e02020" stroke-width="1.1"/><path d="M19.5 9.8l1.4 1.4 3-3.2" fill="none" stroke="#3caa28" stroke-width="1.2"/><path d="M15 12l3 3M18 12l-3 3" stroke="#e02020" stroke-width="1.1"/><path d="M19.5 13.8l1.4 1.4 3-3.2" fill="none" stroke="#3caa28" stroke-width="1.2"/><path d="M15 16l3 3M18 16l-3 3" stroke="#e02020" stroke-width="1.1"/><path d="M19.5 17.8l1.4 1.4 3-3.2" fill="none" stroke="#3caa28" stroke-width="1.2"/><path d="M29.56 21.40 L29.56 24.20 L27.80 23.85 L26.99 25.80 L28.49 26.80 L26.50 28.79 L25.50 27.29 L23.55 28.10 L23.90 29.86 L21.10 29.86 L21.45 28.10 L19.50 27.29 L18.50 28.79 L16.51 26.80 L18.01 25.80 L17.20 23.85 L15.44 24.20 L15.44 21.40 L17.20 21.75 L18.01 19.80 L16.51 18.80 L18.50 16.81 L19.50 18.31 L21.45 17.50 L21.10 15.74 L23.90 15.74 L23.55 17.50 L25.50 18.31 L26.50 16.81 L28.49 18.80 L26.99 19.80 L27.80 21.75Z" fill="url(#gGear)" stroke="#6c6c6c" stroke-width="0.9" stroke-linejoin="round"/><circle cx="22.5" cy="22.8" r="2.6" fill="#f3f3f3" stroke="#7a7a7a" stroke-width="0.8"/></symbol><symbol id="binoc" viewBox="0 0 27 31"><rect x="4.2" y="0.5" width="7.6" height="6.5" rx="0.8" fill="url(#gBin)" stroke="#4a4a4a" stroke-width="0.8"/><rect x="4.6000000000000005" y="7" width="6.8" height="7.2" fill="url(#gBin)" stroke="#4a4a4a" stroke-width="0.8"/><path d="M4.2 14.2H11.8V29a0.8 0.8 0 0 1 -0.8 0.8H1.8a0.8 0.8 0 0 1 -0.8 -0.8V17.5z" fill="url(#gBin)" stroke="#4a4a4a" stroke-width="0.8"/><rect x="2.5" y="26" width="8.5" height="1" fill="#e8e8e8"/><rect x="3.5" y="23" width="1" height="1" fill="#333"/><rect x="5.5" y="23" width="1" height="1" fill="#333"/><rect x="7.5" y="23" width="1" height="1" fill="#333"/><rect x="9.5" y="23" width="1" height="1" fill="#333"/><rect x="5.0" y="1.6" width="6" height="1" fill="#e0e0e0"/><rect x="16.2" y="0.5" width="7.6" height="6.5" rx="0.8" fill="url(#gBin)" stroke="#4a4a4a" stroke-width="0.8"/><rect x="16.599999999999998" y="7" width="6.8" height="7.2" fill="url(#gBin)" stroke="#4a4a4a" stroke-width="0.8"/><path d="M16.2 14.2H23.8L27 17.5V29a0.8 0.8 0 0 1 -0.8 0.8H17a0.8 0.8 0 0 1 -0.8 -0.8z" fill="url(#gBin)" stroke="#4a4a4a" stroke-width="0.8"/><rect x="17.5" y="26" width="8.5" height="1" fill="#e8e8e8"/><rect x="18.5" y="23" width="1" height="1" fill="#333"/><rect x="20.5" y="23" width="1" height="1" fill="#333"/><rect x="22.5" y="23" width="1" height="1" fill="#333"/><rect x="24.5" y="23" width="1" height="1" fill="#333"/><rect x="17.0" y="1.6" width="6" height="1" fill="#e0e0e0"/><rect x="11.8" y="8.5" width="4.4" height="3" fill="#d8d8d8" stroke="#777" stroke-width="0.6"/><rect x="11.8" y="19" width="4.4" height="3" fill="#d8d8d8" stroke="#777" stroke-width="0.6"/></symbol><symbol id="dbRefresh" viewBox="0 0 32 31"><path d="M0.8 4v21a11.8 3.6 0 0 0 23.6 0v-21z" fill="url(#gDb)" stroke="#8f98a2" stroke-width="1"/><ellipse cx="12.6" cy="4" rx="11.8" ry="3.5" fill="url(#gDbTop)" stroke="#8f98a2" stroke-width="1"/><path d="M0.8 12a11.8 3.6 0 0 0 23.6 0M0.8 19a11.8 3.6 0 0 0 23.6 0" fill="none" stroke="#f7f9fb" stroke-width="1.2"/><path d="M0.8 12.8a11.8 3.6 0 0 0 23.6 0M0.8 19.8a11.8 3.6 0 0 0 23.6 0" fill="none" stroke="#a7aeb6" stroke-width="0.6"/><path d="M11.5 16.5c1-5 5-7.5 11-7.5v-3.2l6.8 6-6.8 6v-3.3c-4 0-7 1-9 4z" fill="url(#gGreen)" stroke="#5a9e12" stroke-width="0.9" stroke-linejoin="round"/><path d="M30.5 17.5c-1 5-5 7.5-11 7.5v3.2l-6.8-6 6.8-6v3.3c4 0 7-1 9-4z" fill="url(#gGreen)" stroke="#5a9e12" stroke-width="0.9" stroke-linejoin="round"/></symbol><symbol id="excel" viewBox="0 0 31 31"><path d="M0.5 0.5h14l6 6v20h-20z" fill="url(#gDoc)" stroke="#b4b4b4" stroke-width="1"/><path d="M14.5 0.5v6h6" fill="#fff" stroke="#b4b4b4" stroke-width="1"/><path d="M19 2c4 0 6 2.5 6 7v3h2.5l-4.5 5-4.5-5h2.5v-3c0-2-1-3.5-3-3.5z" fill="url(#gBlueArr)" stroke="#3f88c8" stroke-width="0.8"/><rect x="14.5" y="14.8" width="15.5" height="15" rx="1" fill="url(#gXl)" stroke="#2c7a2c" stroke-width="1.2"/><rect x="16.2" y="16.5" width="12" height="11.5" fill="none" stroke="#c8e8c0" stroke-width="0.7"/><path d="M18 18.5l8 8M26 18.5l-8 8" stroke="#fff" stroke-width="2.6"/></symbol><symbol id="copyDocs" viewBox="0 0 31 31"><path d="M1 1h12l5.5 5.5v15h-17.5z" fill="url(#gBDoc)" stroke="#1b7bc0" stroke-width="1.8" stroke-linejoin="round"/><path d="M12.5 1.5v5.5h5.5" fill="#fff" stroke="#1b7bc0" stroke-width="1.6"/><rect x="2.5" y="17" width="14.5" height="3" fill="#b7d3e7"/><path d="M13 9h12l5.5 5.5v15h-17.5z" fill="url(#gBDoc)" stroke="#1b7bc0" stroke-width="1.8" stroke-linejoin="round"/><path d="M24.5 9.5v5.5h5.5" fill="#fff" stroke="#1b7bc0" stroke-width="1.6"/><rect x="14.5" y="25" width="14.5" height="3" fill="#b7d3e7"/></symbol><symbol id="tblA" viewBox="0 0 28 28"><g opacity="1"><rect x="1" y="1" width="26" height="26" rx="1.8" fill="#fff" stroke="#8fb7dc" stroke-width="1.8"/><rect x="2.5" y="2.5" width="23" height="1.8" fill="#e3f1fb"/><rect x="2.5" y="4.8" width="23" height="4.2" fill="#e8f4fb"/><rect x="2.5" y="9.8" width="23" height="4.2" fill="#f6c5c8"/><rect x="2.5" y="14.8" width="23" height="4.2" fill="#d5f3d5"/><rect x="2.5" y="19.8" width="23" height="4.2" fill="#eef4fb"/><rect x="2.5" y="4.3" width="23" height="0.9" fill="#b9d2ea"/><rect x="2.5" y="9.2" width="23" height="0.9" fill="#b9d2ea"/><rect x="2.5" y="14.2" width="23" height="0.9" fill="#b9d2ea"/><rect x="2.5" y="19.2" width="23" height="0.9" fill="#b9d2ea"/><rect x="2.5" y="24.2" width="23" height="0.9" fill="#b9d2ea"/><rect x="9.2" y="2.5" width="1" height="23" fill="#b9d2ea"/><rect x="15.2" y="2.5" width="1" height="23" fill="#b9d2ea"/><rect x="21.2" y="2.5" width="1" height="23" fill="#b9d2ea"/></g></symbol><symbol id="tblB" viewBox="0 0 28 28"><g opacity="1"><rect x="1" y="1" width="26" height="26" rx="1.8" fill="#fff" stroke="#2070b2" stroke-width="1.8"/><rect x="2.5" y="2.5" width="23" height="1.8" fill="#2ee82e"/><rect x="2.5" y="4.8" width="23" height="4.2" fill="#2ee82e"/><rect x="2.5" y="9.8" width="23" height="4.2" fill="#ff9393"/><rect x="2.5" y="14.8" width="23" height="4.2" fill="#c9ffc9"/><rect x="2.5" y="19.8" width="23" height="4.2" fill="#ffe2e2"/><rect x="2.5" y="4.3" width="23" height="0.9" fill="#8cb2e0"/><rect x="2.5" y="9.2" width="23" height="0.9" fill="#8cb2e0"/><rect x="2.5" y="14.2" width="23" height="0.9" fill="#8cb2e0"/><rect x="2.5" y="19.2" width="23" height="0.9" fill="#8cb2e0"/><rect x="2.5" y="24.2" width="23" height="0.9" fill="#8cb2e0"/><rect x="9.2" y="2.5" width="1" height="23" fill="#8cb2e0"/><rect x="15.2" y="2.5" width="1" height="23" fill="#8cb2e0"/><rect x="21.2" y="2.5" width="1" height="23" fill="#8cb2e0"/></g></symbol><symbol id="tblC" viewBox="0 0 28 28"><g opacity="1"><rect x="1" y="1" width="26" height="26" rx="1.8" fill="#fff" stroke="#2070b2" stroke-width="1.8"/><rect x="2.5" y="2.5" width="23" height="1.8" fill="#2ee82e"/><rect x="2.5" y="4.8" width="23" height="4.2" fill="#2ee82e"/><rect x="2.5" y="9.8" width="23" height="4.2" fill="#99ec99"/><rect x="2.5" y="14.8" width="23" height="4.2" fill="#c9ffc9"/><rect x="2.5" y="19.8" width="23" height="4.2" fill="#ebffe8"/><rect x="2.5" y="4.3" width="23" height="0.9" fill="#8cb2e0"/><rect x="2.5" y="9.2" width="23" height="0.9" fill="#8cb2e0"/><rect x="2.5" y="14.2" width="23" height="0.9" fill="#8cb2e0"/><rect x="2.5" y="19.2" width="23" height="0.9" fill="#8cb2e0"/><rect x="2.5" y="24.2" width="23" height="0.9" fill="#8cb2e0"/><rect x="9.2" y="2.5" width="1" height="23" fill="#8cb2e0"/><rect x="15.2" y="2.5" width="1" height="23" fill="#8cb2e0"/><rect x="21.2" y="2.5" width="1" height="23" fill="#8cb2e0"/></g></symbol><symbol id="tblD" viewBox="0 0 28 28"><g opacity="1"><rect x="1" y="1" width="26" height="26" rx="1.8" fill="#fff" stroke="#2070b2" stroke-width="1.8"/><rect x="2.5" y="2.5" width="23" height="1.8" fill="#ff8c8c"/><rect x="2.5" y="4.8" width="23" height="4.2" fill="#ff8c8c"/><rect x="2.5" y="9.8" width="23" height="4.2" fill="#ffa0a0"/><rect x="2.5" y="14.8" width="23" height="4.2" fill="#ffcece"/><rect x="2.5" y="19.8" width="23" height="4.2" fill="#ffe6e6"/><rect x="2.5" y="4.3" width="23" height="0.9" fill="#8cb2e0"/><rect x="2.5" y="9.2" width="23" height="0.9" fill="#8cb2e0"/><rect x="2.5" y="14.2" width="23" height="0.9" fill="#8cb2e0"/><rect x="2.5" y="19.2" width="23" height="0.9" fill="#8cb2e0"/><rect x="2.5" y="24.2" width="23" height="0.9" fill="#8cb2e0"/><rect x="9.2" y="2.5" width="1" height="23" fill="#8cb2e0"/><rect x="15.2" y="2.5" width="1" height="23" fill="#8cb2e0"/><rect x="21.2" y="2.5" width="1" height="23" fill="#8cb2e0"/></g></symbol><symbol id="tblE" viewBox="0 0 28 28"><g opacity="1"><rect x="1" y="1" width="26" height="26" rx="1.8" fill="#fff" stroke="#2070b2" stroke-width="1.8"/><rect x="2.5" y="2.5" width="23" height="1.8" fill="#dff3ff"/><rect x="2.5" y="4.8" width="23" height="4.2" fill="#dff3ff"/><rect x="2.5" y="9.8" width="23" height="4.2" fill="#dff3ff"/><rect x="2.5" y="14.8" width="23" height="4.2" fill="#e7f6ff"/><rect x="2.5" y="19.8" width="23" height="4.2" fill="#eaf8ff"/><rect x="2.5" y="4.3" width="23" height="0.9" fill="#8cb2e0"/><rect x="2.5" y="9.2" width="23" height="0.9" fill="#8cb2e0"/><rect x="2.5" y="14.2" width="23" height="0.9" fill="#8cb2e0"/><rect x="2.5" y="19.2" width="23" height="0.9" fill="#8cb2e0"/><rect x="2.5" y="24.2" width="23" height="0.9" fill="#8cb2e0"/><rect x="9.2" y="2.5" width="1" height="23" fill="#8cb2e0"/><rect x="15.2" y="2.5" width="1" height="23" fill="#8cb2e0"/><rect x="21.2" y="2.5" width="1" height="23" fill="#8cb2e0"/></g></symbol><symbol id="down2bar" viewBox="0 0 22 25"><path d="M5 10.5H15.8V14H21V15L10.6 20.5L0.3 15V14H5Z" fill="#cde68c" stroke="#a9cc6a" stroke-width="1" stroke-linejoin="round"/><path d="M5 0.8H15.8V6H21V7L10.6 12.5L0.3 7V6H5Z" fill="#cde68c" stroke="#a9cc6a" stroke-width="1" stroke-linejoin="round"/><path d="M6.5 2.2H14.3V7.5" fill="none" stroke="#e4f4b4" stroke-width="0.8"/><rect x="0.3" y="22" width="20.7" height="2.6" rx="1.3" fill="#cde68c" stroke="#a9cc6a" stroke-width="1" stroke-linejoin="round"/></symbol><symbol id="down2" viewBox="0 0 22 25"><path d="M5 10.5H15.8V14H21V15L10.6 20.5L0.3 15V14H5Z" fill="#cde68c" stroke="#a9cc6a" stroke-width="1" stroke-linejoin="round"/><path d="M5 0.8H15.8V6H21V7L10.6 12.5L0.3 7V6H5Z" fill="#cde68c" stroke="#a9cc6a" stroke-width="1" stroke-linejoin="round"/><path d="M6.5 2.2H14.3V7.5" fill="none" stroke="#e4f4b4" stroke-width="0.8"/></symbol><symbol id="up2" viewBox="0 0 22 25"><g transform="translate(0,21.3) scale(1,-1)"><path d="M5 10.5H15.8V14H21V15L10.6 20.5L0.3 15V14H5Z" fill="#cde68c" stroke="#a9cc6a" stroke-width="1" stroke-linejoin="round"/><path d="M5 0.8H15.8V6H21V7L10.6 12.5L0.3 7V6H5Z" fill="#cde68c" stroke="#a9cc6a" stroke-width="1" stroke-linejoin="round"/><path d="M6.5 2.2H14.3V7.5" fill="none" stroke="#e4f4b4" stroke-width="0.8"/></g></symbol><symbol id="up2bar" viewBox="0 0 22 25"><g transform="translate(0,25) scale(1,-1)"><path d="M5 10.5H15.8V14H21V15L10.6 20.5L0.3 15V14H5Z" fill="#cde68c" stroke="#a9cc6a" stroke-width="1" stroke-linejoin="round"/><path d="M5 0.8H15.8V6H21V7L10.6 12.5L0.3 7V6H5Z" fill="#cde68c" stroke="#a9cc6a" stroke-width="1" stroke-linejoin="round"/><path d="M6.5 2.2H14.3V7.5" fill="none" stroke="#e4f4b4" stroke-width="0.8"/></g><rect x="0.3" y="0.4" width="20.7" height="2.6" rx="1.3" fill="#cde68c" stroke="#a9cc6a" stroke-width="1" stroke-linejoin="round"/></symbol><symbol id="cd1" viewBox="0 0 27 32"><path d="M0.5 0.5h17.5l6.5 6.5v23h-24z" fill="url(#gCDoc)" stroke="#d6d6d6" stroke-width="1"/><path d="M18 0.5v6.5h6.5" fill="#fff" stroke="#d6d6d6" stroke-width="1"/><rect x="0.5" y="29.5" width="24" height="1.2" fill="#d0d0d0"/><rect x="2.5" y="9.5" width="8" height="8" fill="none" stroke="#a4aed0" stroke-width="1"/><path d="M4.0 13.0l2.5 3 5.5-7" fill="none" stroke="#ea6a64" stroke-width="1.6" stroke-linecap="round"/><rect x="2.5" y="19" width="8" height="8" fill="none" stroke="#a4aed0" stroke-width="1"/><path d="M4.0 22.5l2.5 3 5.5-7" fill="none" stroke="#ea6a64" stroke-width="1.6" stroke-linecap="round"/></symbol><symbol id="cd2" viewBox="0 0 27 32"><path d="M0.5 0.5h17.5l6.5 6.5v23h-24z" fill="url(#gCDoc)" stroke="#d6d6d6" stroke-width="1"/><path d="M18 0.5v6.5h6.5" fill="#fff" stroke="#d6d6d6" stroke-width="1"/><rect x="0.5" y="29.5" width="24" height="1.2" fill="#d0d0d0"/><rect x="2.5" y="9.5" width="8" height="8" fill="none" stroke="#a4aed0" stroke-width="1"/><rect x="2.5" y="19" width="8" height="8" fill="none" stroke="#a4aed0" stroke-width="1"/></symbol><symbol id="cd3" viewBox="0 0 27 32"><path d="M0.5 0.5h17.5l6.5 6.5v23h-24z" fill="#c0c0c0" stroke="#bdbdbd" stroke-width="1"/><path d="M18 0.5v6.5h6.5" fill="#d8d8d8" stroke="#bdbdbd" stroke-width="1"/><rect x="0.5" y="29.5" width="24" height="1.2" fill="#d0d0d0"/><rect x="2.5" y="9.5" width="8" height="8" fill="none" stroke="#a0a0a0" stroke-width="1"/><path d="M4.0 13.0l2.5 3 5.5-7" fill="none" stroke="#62d8e8" stroke-width="1.6" stroke-linecap="round"/><rect x="2.5" y="19" width="8" height="8" fill="none" stroke="#a0a0a0" stroke-width="1"/><path d="M4.0 22.5l2.5 3 5.5-7" fill="none" stroke="#62d8e8" stroke-width="1.6" stroke-linecap="round"/></symbol><symbol id="cd4" viewBox="0 0 27 32"><path d="M0.5 0.5h17.5l6.5 6.5v23h-24z" fill="url(#gCDoc)" stroke="#d6d6d6" stroke-width="1"/><path d="M18 0.5v6.5h6.5" fill="#fff" stroke="#d6d6d6" stroke-width="1"/><rect x="0.5" y="29.5" width="24" height="1.2" fill="#d0d0d0"/><rect x="2.5" y="9.5" width="8" height="8" fill="none" stroke="#a4aed0" stroke-width="1"/><path d="M4.0 13.0l2.5 3 5.5-7" fill="none" stroke="#ea6a64" stroke-width="1.6" stroke-linecap="round"/><rect x="2.5" y="19" width="8" height="8" fill="none" stroke="#a4aed0" stroke-width="1"/><path d="M4.0 22.5l2.5 3 5.5-7" fill="none" stroke="#ea6a64" stroke-width="1.6" stroke-linecap="round"/><path d="M-0.5 19h15v-4l8 6.5-8 6.5v-4h-15z" fill="#c6e08a" stroke="#a6c86a" stroke-width="1"/></symbol><symbol id="cd5" viewBox="0 0 27 32"><path d="M0.5 0.5h17.5l6.5 6.5v23h-24z" fill="url(#gCDoc)" stroke="#d6d6d6" stroke-width="1"/><path d="M18 0.5v6.5h6.5" fill="#fff" stroke="#d6d6d6" stroke-width="1"/><rect x="0.5" y="29.5" width="24" height="1.2" fill="#d0d0d0"/><rect x="2.5" y="9.5" width="8" height="8" fill="none" stroke="#a4aed0" stroke-width="1"/><path d="M4.0 13.0l2.5 3 5.5-7" fill="none" stroke="#ea6a64" stroke-width="1.6" stroke-linecap="round"/><rect x="2.5" y="19" width="8" height="8" fill="none" stroke="#a4aed0" stroke-width="1"/><path d="M4.0 22.5l2.5 3 5.5-7" fill="none" stroke="#ea6a64" stroke-width="1.6" stroke-linecap="round"/><path d="M16 20.5l10 10M26 20.5l-10 10" stroke="#f5a39a" stroke-width="3.6" stroke-linecap="round"/></symbol><symbol id="cd6" viewBox="0 0 27 32"><path d="M0.5 0.5h17.5l6.5 6.5v23h-24z" fill="url(#gCDoc)" stroke="#d6d6d6" stroke-width="1"/><path d="M18 0.5v6.5h6.5" fill="#fff" stroke="#d6d6d6" stroke-width="1"/><rect x="0.5" y="29.5" width="24" height="1.2" fill="#d0d0d0"/><rect x="14.5" y="9.5" width="8" height="8" fill="none" stroke="#a4aed0" stroke-width="1"/><path d="M16.0 13.0l2.5 3 5.5-7" fill="none" stroke="#ea6a64" stroke-width="1.6" stroke-linecap="round"/><rect x="14.5" y="19" width="8" height="8" fill="none" stroke="#a4aed0" stroke-width="1"/><path d="M16.0 22.5l2.5 3 5.5-7" fill="none" stroke="#ea6a64" stroke-width="1.6" stroke-linecap="round"/></symbol><symbol id="cd7" viewBox="0 0 27 32"><path d="M0.5 0.5h17.5l6.5 6.5v23h-24z" fill="url(#gCDoc)" stroke="#d6d6d6" stroke-width="1"/><path d="M18 0.5v6.5h6.5" fill="#fff" stroke="#d6d6d6" stroke-width="1"/><rect x="0.5" y="29.5" width="24" height="1.2" fill="#d0d0d0"/><rect x="14.5" y="9.5" width="8" height="8" fill="none" stroke="#a4aed0" stroke-width="1"/><rect x="14.5" y="19" width="8" height="8" fill="none" stroke="#a4aed0" stroke-width="1"/></symbol><symbol id="cd8" viewBox="0 0 27 32"><path d="M0.5 0.5h17.5l6.5 6.5v23h-24z" fill="#c0c0c0" stroke="#bdbdbd" stroke-width="1"/><path d="M18 0.5v6.5h6.5" fill="#d8d8d8" stroke="#bdbdbd" stroke-width="1"/><rect x="0.5" y="29.5" width="24" height="1.2" fill="#d0d0d0"/><rect x="14.5" y="9.5" width="8" height="8" fill="none" stroke="#a0a0a0" stroke-width="1"/><path d="M16.0 13.0l2.5 3 5.5-7" fill="none" stroke="#62d8e8" stroke-width="1.6" stroke-linecap="round"/><rect x="14.5" y="19" width="8" height="8" fill="none" stroke="#a0a0a0" stroke-width="1"/><path d="M16.0 22.5l2.5 3 5.5-7" fill="none" stroke="#62d8e8" stroke-width="1.6" stroke-linecap="round"/></symbol><symbol id="cd9" viewBox="0 0 27 32"><path d="M0.5 0.5h17.5l6.5 6.5v23h-24z" fill="url(#gCDoc)" stroke="#d6d6d6" stroke-width="1"/><path d="M18 0.5v6.5h6.5" fill="#fff" stroke="#d6d6d6" stroke-width="1"/><rect x="0.5" y="29.5" width="24" height="1.2" fill="#d0d0d0"/><rect x="14.5" y="9.5" width="8" height="8" fill="none" stroke="#a4aed0" stroke-width="1"/><path d="M16.0 13.0l2.5 3 5.5-7" fill="none" stroke="#ea6a64" stroke-width="1.6" stroke-linecap="round"/><rect x="14.5" y="19" width="8" height="8" fill="none" stroke="#a4aed0" stroke-width="1"/><path d="M16.0 22.5l2.5 3 5.5-7" fill="none" stroke="#ea6a64" stroke-width="1.6" stroke-linecap="round"/><path d="M25.5 19h-15v-4l-8 6.5 8 6.5v-4h15z" fill="#c6e08a" stroke="#a6c86a" stroke-width="1"/></symbol><symbol id="cd10" viewBox="0 0 27 32"><path d="M0.5 0.5h17.5l6.5 6.5v23h-24z" fill="url(#gCDoc)" stroke="#d6d6d6" stroke-width="1"/><path d="M18 0.5v6.5h6.5" fill="#fff" stroke="#d6d6d6" stroke-width="1"/><rect x="0.5" y="29.5" width="24" height="1.2" fill="#d0d0d0"/><rect x="14.5" y="9.5" width="8" height="8" fill="none" stroke="#a4aed0" stroke-width="1"/><path d="M16.0 13.0l2.5 3 5.5-7" fill="none" stroke="#ea6a64" stroke-width="1.6" stroke-linecap="round"/><rect x="14.5" y="19" width="8" height="8" fill="none" stroke="#a4aed0" stroke-width="1"/><path d="M16.0 22.5l2.5 3 5.5-7" fill="none" stroke="#ea6a64" stroke-width="1.6" stroke-linecap="round"/><path d="M-1 20.5l10 10M9 20.5l-10 10" stroke="#f5a39a" stroke-width="3.6" stroke-linecap="round"/></symbol><symbol id="sFoldDb" viewBox="0 0 24 22"><path d="M1 1h7l1.2 1.6h11.3v15.5h-19.5z" fill="url(#gFoldB)" stroke="#e3b25a" stroke-width="1"/>
<path d="M1.5 18.5L4 8.8h6.8l1-2.6h11.7L21 18.5z" fill="url(#gFoldF)" stroke="#e3b25a" stroke-width="1" stroke-linejoin="round"/><path d="M12.5 11.5v8a5.3 1.8 0 0 0 10.6 0v-8z" fill="url(#gDb)" stroke="#a3abb4" stroke-width="0.7"/><ellipse cx="17.8" cy="11.5" rx="5.3" ry="1.8" fill="#eef1f4" stroke="#a3abb4" stroke-width="0.7"/><path d="M12.5 15.5a5.3 1.8 0 0 0 10.6 0" fill="none" stroke="#f5f7f9" stroke-width="0.8"/></symbol><symbol id="sFoldStar" viewBox="0 0 24 22"><path d="M1 1h7l1.2 1.6h11.3v15.5h-19.5z" fill="url(#gFoldB)" stroke="#e3b25a" stroke-width="1"/>
<path d="M1.5 18.5L4 8.8h6.8l1-2.6h11.7L21 18.5z" fill="url(#gFoldF)" stroke="#e3b25a" stroke-width="1" stroke-linejoin="round"/><path d="M17.5 11l1.7 3.4 3.7.5-2.7 2.6.7 3.7-3.4-1.8-3.4 1.8.7-3.7-2.7-2.6 3.7-.5z" fill="url(#gStar)" stroke="#e59a25" stroke-width="0.8" stroke-linejoin="round"/></symbol><symbol id="sDbRefresh" viewBox="0 0 32 31"><path d="M0.8 4v21a11.8 3.6 0 0 0 23.6 0v-21z" fill="url(#gDb)" stroke="#8f98a2" stroke-width="1"/><ellipse cx="12.6" cy="4" rx="11.8" ry="3.5" fill="url(#gDbTop)" stroke="#8f98a2" stroke-width="1"/><path d="M0.8 12a11.8 3.6 0 0 0 23.6 0M0.8 19a11.8 3.6 0 0 0 23.6 0" fill="none" stroke="#f7f9fb" stroke-width="1.2"/><path d="M0.8 12.8a11.8 3.6 0 0 0 23.6 0M0.8 19.8a11.8 3.6 0 0 0 23.6 0" fill="none" stroke="#a7aeb6" stroke-width="0.6"/><path d="M11.5 16.5c1-5 5-7.5 11-7.5v-3.2l6.8 6-6.8 6v-3.3c-4 0-7 1-9 4z" fill="url(#gGreen)" stroke="#5a9e12" stroke-width="0.9" stroke-linejoin="round"/><path d="M30.5 17.5c-1 5-5 7.5-11 7.5v3.2l-6.8-6 6.8-6v3.3c4 0 7-1 9-4z" fill="url(#gGreen)" stroke="#5a9e12" stroke-width="0.9" stroke-linejoin="round"/></symbol><symbol id="home" viewBox="0 0 16 16"><path d="M10.8 1.5h1.6v4h-1.6z" fill="#fff" stroke="#8a8a8a" stroke-width="0.8"/>
<path d="M2.5 8v7.5h11v-7.5" fill="#f3f0e0" stroke="#8c9096" stroke-width="0.9"/>
<path d="M0.8 8.5L8 2l7.2 6.5" fill="none" stroke="#c86e10" stroke-width="1.8" stroke-linejoin="round"/>
<rect x="5.6" y="9" width="4.6" height="6.6" fill="url(#gDoor)" stroke="#b25e0a" stroke-width="0.8"/>
<rect x="7.3" y="5.6" width="1.8" height="1.8" fill="#1a50c8"/></symbol><symbol id="tabxx" viewBox="0 0 23 11"><rect x="0.5" y="0.5" width="22.3" height="10.3" fill="#dfe7f0" stroke="#c4ccd6" stroke-width="0.8"/>
<rect x="7.5" y="0.6" width="15.2" height="6" fill="#bcc4ce"/>
<path d="M8.8 1.2l5.2 5.2M14 1.2L8.8 6.4M16.6 1.2l5.2 5.2M21.8 1.2l-5.2 5.2" stroke="#3a3a3a" stroke-width="2"/></symbol><symbol id="tdef" viewBox="0 0 16 16"><rect x="3.8" y="1.8" width="11.2" height="11.2" fill="#eef8ff" stroke="#1c84cc" stroke-width="1.3"/>
<rect x="4.8" y="3" width="9.4" height="1" fill="#f5b848"/>
<path d="M7 3v9.5M9.6 3v9.5M12.2 3v9.5" stroke="#b8dcf0" stroke-width="0.8"/>
<path d="M3 5L3 16h11v-3.5h-5.5z" fill="url(#gSq)" stroke="#d88a12" stroke-width="0.9" stroke-linejoin="round"/>
<path d="M5 10v4h3.8z" fill="#fff2c8" stroke="#e6a030" stroke-width="0.5"/>
<path d="M4.5 14.5h9" stroke="#fff0c0" stroke-width="0.6" stroke-dasharray="1 1"/>
<path d="M8 12l5-5.5 1.5 1.4-5 5.5-2 .6z" fill="#f0a040" stroke="#c07820" stroke-width="0.5"/>
<path d="M13 6.5l1.2-1.3 1.5 1.4-1.2 1.3z" fill="#e070c8"/></symbol><symbol id="tgrid" viewBox="0 0 16 16"><rect x="0.5" y="0.5" width="15" height="15" fill="#fff" stroke="#84b8e0" stroke-width="1"/>
<rect x="1.5" y="1.5" width="13" height="4" fill="#d8ecfb"/>
<rect x="1.5" y="6" width="13" height="4" fill="#6be06b"/>
<rect x="1.5" y="10.5" width="13" height="4" fill="#f48a8a"/>
<rect x="5.3" y="1" width="0.8" height="14" fill="#a9d0ee"/><rect x="9.8" y="1" width="0.8" height="14" fill="#a9d0ee"/>
<rect x="1" y="5.4" width="14" height="0.6" fill="#a9d0ee"/><rect x="1" y="10" width="14" height="0.6" fill="#a9d0ee"/></symbol><symbol id="tabx" viewBox="0 0 12 12"><path d="M2.2 2.2l7.6 7.6M9.8 2.2l-7.6 7.6" stroke="#727272" stroke-width="3.2" stroke-linecap="round"/></symbol><symbol id="schema" viewBox="0 0 17 16"><path d="M1 1h8l3 3h-8z" fill="#c8cfdc" stroke="#8d98ac" stroke-width="0.7"/>
<path d="M2.5 2.2h8l3 3h-8zM4 3.5h8l3 3h-8z" fill="#d5dbe6" stroke="#8d98ac" stroke-width="0.7"/>
<rect x="4.5" y="4.5" width="10" height="4" fill="#e9edf3" stroke="#8d98ac" stroke-width="0.6"/>
<rect x="0.8" y="8.5" width="15.5" height="6.8" rx="0.8" fill="url(#gBrown)" stroke="#93581e" stroke-width="0.9"/>
<rect x="5" y="10.8" width="7" height="2.2" fill="#e8d0b0"/></symbol><symbol id="views" viewBox="0 0 17 16"><rect x="3" y="0.8" width="11.5" height="7" fill="#eef7ff" stroke="#1f7fc8" stroke-width="1.3"/>
<rect x="4.5" y="2" width="8.5" height="1" fill="#f5b640"/>
<path d="M6 3v7M8.8 3v7M11.5 3v7" stroke="#9cc2e6" stroke-width="0.7"/>
<rect x="1" y="8.2" width="5.5" height="7" rx="0.8" fill="#cfe5f7" stroke="#1f7fc8" stroke-width="1.3"/>
<rect x="10.6" y="6.6" width="5.8" height="7" rx="0.8" fill="#cfe5f7" stroke="#1f7fc8" stroke-width="1.3"/></symbol><symbol id="matviews" viewBox="0 0 17 16"><rect x="3" y="0.8" width="11.5" height="7" fill="#fff4ee" stroke="#c26c48" stroke-width="1.3"/>
<rect x="4.5" y="2" width="8.5" height="1" fill="#b8b8c8"/>
<path d="M6 3v7M8.8 3v7M11.5 3v7" stroke="#d8b0a0" stroke-width="0.7"/>
<rect x="1" y="8.2" width="5.5" height="7" rx="0.8" fill="#f4e4e0" stroke="#c26c48" stroke-width="1.3"/>
<rect x="10.6" y="6.6" width="5.8" height="7" rx="0.8" fill="#f4e4e0" stroke="#c26c48" stroke-width="1.3"/></symbol><symbol id="proc" viewBox="0 0 17 16"><rect x="1" y="0.8" width="14.5" height="14.5" rx="1" fill="#e4e4e4" stroke="#a8a8a8" stroke-width="1"/>
<rect x="2.2" y="13.5" width="12.2" height="1.2" fill="#c8c8c8"/>
<path d="M3.8 4h9v2.5h-2.5v6h-3.5v-3.5h-3z" fill="#8a8a8a"/></symbol><symbol id="fx" viewBox="0 0 18 18"><text x="1" y="11.2" font-family="Liberation Serif" font-style="italic" font-weight="700" font-size="16.5" fill="#1a1a1a">f</text><text x="8.6" y="11.2" font-family="Liberation Serif" font-style="italic" font-weight="700" font-size="16" fill="#1a1a1a">x</text></symbol><symbol id="seq" viewBox="0 0 17 16"><path d="M1 4.5h4.5l1.5-2h3l1.5 2h4.5v11h-15z" fill="#eef3f8" stroke="#9db3cc" stroke-width="1"/>
<rect x="3.5" y="11" width="2.5" height="3" fill="#8f9aa6"/><rect x="7.5" y="9" width="2.5" height="5" fill="#8f9aa6"/><rect x="11.2" y="7" width="2.5" height="7" fill="#b8c0c8"/></symbol><symbol id="stack" viewBox="0 0 17 16"><rect x="0.6" y="0.6" width="10.5" height="11.5" rx="0.6" fill="#e6f4fb" stroke="#4d9bd2" stroke-width="1"/>
<rect x="1.5" y="1.5" width="8.7" height="1.3" fill="#f3c768"/>
<rect x="2.6" y="2" width="10.5" height="11.8" rx="0.6" fill="#e6f4fb" stroke="#4d9bd2" stroke-width="1"/>
<rect x="3.5" y="3" width="8.7" height="1.3" fill="#f3c768"/>
<rect x="5" y="3.6" width="11.2" height="11.8" rx="0.6" fill="#eef8fd" stroke="#4d9bd2" stroke-width="1"/>
<rect x="5.9" y="4.6" width="9.4" height="1.4" fill="#f3c768"/>
<path d="M8.9 6v9M12.3 6v9" stroke="#a6cfe8" stroke-width="0.9"/></symbol><symbol id="rf1" viewBox="0 0 16 14"><path d="M1 1.5h5l1 1.3h7.5v9.5h-13.5z" fill="#fbe3a0" stroke="#e8bd60" stroke-width="0.8"/>
<path d="M1.5 12.5L3.5 6h11.5l-1.5 6.5z" fill="#fcd983" stroke="#e8bd60" stroke-width="0.8"/><path d="M0.8 9.5h4v-2.5l4.2 3.8-4.2 3.8v-2.5h-4z" transform="rotate(45 5 10.6)" fill="#5cb82a" stroke="#3e8a14" stroke-width="0.6"/></symbol><symbol id="rf2" viewBox="0 0 16 14"><path d="M1 1.5h5l1 1.3h7.5v9.5h-13.5z" fill="#fbe3a0" stroke="#e8bd60" stroke-width="0.8"/><path d="M2.5 4h11v8h-11z" fill="#fff3cf"/><path d="M1 6.5h13.5v6h-13.5z" fill="#fcd983" stroke="#e8bd60" stroke-width="0.8"/><path d="M9 8.5h5.5v3h1.5l-4.2 3.5-4.3-3.5h1.5z" fill="#5cb82a" stroke="#3e8a14" stroke-width="0.6"/></symbol><symbol id="rfBoth" viewBox="0 0 17 15"><path d="M1 1h5l1 1.3h9v11.5h-15z" fill="#fbe3a0" stroke="#e8bd60" stroke-width="0.8"/><path d="M1 5.5h15v8.3h-15z" fill="#fcd983" stroke="#e8bd60" stroke-width="0.8"/>
<path d="M0.8 9.5h3v-1.5l3.5 3.5-3.5 3.5v-1.5h-3z" transform="rotate(90 4 11.5)" fill="#5cb82a" stroke="#3e8a14" stroke-width="0.6"/>
<path d="M9.8 9.5h3v-1.5l3.5 3.5-3.5 3.5v-1.5h-3z" transform="rotate(90 13 11.5)" fill="#5cb82a" stroke="#3e8a14" stroke-width="0.6"/></symbol><symbol id="redx" viewBox="0 0 17 16"><path d="M2.8 2.6l11.4 10.8M14.2 2.6l-11.4 10.8" stroke="#dc4a36" stroke-width="4.2" stroke-linecap="round"/><path d="M2.8 2.6l11.4 10.8M14.2 2.6l-11.4 10.8" stroke="#f2705c" stroke-width="2.2" stroke-linecap="round"/></symbol><symbol id="caret" viewBox="0 0 19 19"><circle cx="9.5" cy="9.5" r="8.8" fill="#fff" stroke="#3c3c3c" stroke-width="1.1"/><path d="M5.8 11.2l3.7-3.6 3.7 3.6" fill="none" stroke="#222" stroke-width="2"/></symbol><symbol id="plus" viewBox="0 0 16 16"><circle cx="8" cy="8" r="7.2" fill="url(#gPlus)" stroke="#4f9a14" stroke-width="0.9"/><path d="M8 3.8v8.4M3.8 8h8.4" stroke="#fff" stroke-width="2.4"/></symbol><symbol id="foldPlus" viewBox="0 0 17 16"><path d="M1 1h5l1 1.3h8v10h-14z" fill="#fbe3a0" stroke="#e8bd60" stroke-width="0.8"/><path d="M1 5.5h14v7h-14z" fill="#fcd983" stroke="#e8bd60" stroke-width="0.8"/>
<circle cx="12.5" cy="12" r="3.8" fill="#5cb82a" stroke="#fff" stroke-width="0.8"/><path d="M12.5 10v4M10.5 12h4" stroke="#fff" stroke-width="1.2"/></symbol><symbol id="foldSearch" viewBox="0 0 18 16"><path d="M1 1h5l1 1.3h9v11h-15z" fill="#fbe3a0" stroke="#e8bd60" stroke-width="0.8"/><path d="M1 5h15v8.3h-15z" fill="#fcd983" stroke="#e8bd60" stroke-width="0.8"/>
<circle cx="10.5" cy="9.5" r="3.6" fill="#b9def5" stroke="#7aaad0" stroke-width="1"/><path d="M13 12l3 3" stroke="#d08c30" stroke-width="2"/></symbol></defs></svg>
<svg class="r" style="left:6px;top:5px" width="22" height="21" viewBox="0 0 22 21"><g fill="none" stroke="#2b8b80"><path d="M8.8 7.6A4.3 4.3 0 0 0 8.8 16.6" stroke-width="2.6"/><path d="M13 3A4.4 4.4 0 0 1 13 11.8" stroke-width="2.6"/><path d="M5 3.8H8.8M13 15.6H16.6" stroke-width="1.7"/><path d="M10.9 2.3V18" stroke-width="1.5" stroke-dasharray="3.4 1.3"/></g><path d="M2.8 3.8L5.8 1.8V5.8Z M19.2 15.6L16.2 13.6V17.6Z" fill="#2b8b80"/></svg>
<svg class="r" style="left:8px;top:36px" width="32" height="32"><use href="#foldDb"/></svg>
<svg class="r" style="left:50px;top:36px" width="32" height="32"><use href="#foldStar"/></svg>
<svg class="r" style="left:88px;top:36px" width="36" height="32"><use href="#tables3"/></svg>
<svg class="r" style="left:136px;top:36px" width="30" height="31"><use href="#selTable"/></svg>
<svg class="r" style="left:177px;top:35px" width="32" height="32"><use href="#winGear"/></svg>
<svg class="r" style="left:221px;top:36px" width="27" height="31"><use href="#binoc"/></svg>
<div class="r" style="left:258px;top:35px;width:1px;height:34px;background:#a0a8b4;"></div>
<div class="r" style="left:389px;top:35px;width:1px;height:34px;background:#a0a8b4;"></div>
<div class="r" style="left:604px;top:35px;width:1px;height:34px;background:#a0a8b4;"></div>
<div class="r" style="left:777px;top:35px;width:1px;height:34px;background:#a0a8b4;"></div>
<div class="r" style="left:992px;top:35px;width:1px;height:34px;background:#a0a8b4;"></div>
<div class="r" style="left:1207px;top:35px;width:1px;height:34px;background:#a0a8b4;"></div>
<svg class="r" style="left:266px;top:36px" width="32" height="31"><use href="#dbRefresh"/></svg>
<svg class="r" style="left:309px;top:36px" width="31" height="31"><use href="#excel"/></svg>
<svg class="r" style="left:351px;top:36px" width="31" height="31"><use href="#copyDocs"/></svg>
<svg class="r" style="left:398px;top:37px" width="28" height="28"><use href="#tblA"/></svg>
<svg class="r" style="left:440px;top:37px" width="28" height="28"><use href="#tblB"/></svg>
<svg class="r" style="left:482px;top:37px" width="28" height="28"><use href="#tblC"/></svg>
<svg class="r" style="left:524px;top:37px" width="28" height="28"><use href="#tblD"/></svg>
<svg class="r" style="left:566px;top:37px" width="28" height="28"><use href="#tblE"/></svg>
<svg class="r" style="left:617px;top:41px" width="22" height="25"><use href="#down2bar"/></svg>
<svg class="r" style="left:659px;top:41px" width="22" height="25"><use href="#down2"/></svg>
<svg class="r" style="left:701px;top:42px" width="22" height="25"><use href="#up2"/></svg>
<svg class="r" style="left:743px;top:38px" width="22" height="25"><use href="#up2bar"/></svg>
<svg class="r" style="left:788px;top:36px" width="27" height="32"><use href="#cd1"/></svg>
<svg class="r" style="left:830px;top:36px" width="27" height="32"><use href="#cd2"/></svg>
<svg class="r" style="left:872px;top:36px" width="27" height="32"><use href="#cd3"/></svg>
<svg class="r" style="left:914px;top:36px" width="27" height="32"><use href="#cd4"/></svg>
<svg class="r" style="left:956px;top:36px" width="27" height="32"><use href="#cd5"/></svg>
<svg class="r" style="left:1003px;top:36px" width="27" height="32"><use href="#cd6"/></svg>
<svg class="r" style="left:1045px;top:36px" width="27" height="32"><use href="#cd7"/></svg>
<svg class="r" style="left:1087px;top:36px" width="27" height="32"><use href="#cd8"/></svg>
<svg class="r" style="left:1129px;top:36px" width="27" height="32"><use href="#cd9"/></svg>
<svg class="r" style="left:1171px;top:36px" width="27" height="32"><use href="#cd10"/></svg>
<svg class="r" style="left:1214px;top:63px" width="8" height="8" viewBox="0 0 8 8"><rect x="1" y="1" width="5.5" height="1.1" fill="#000"/><path d="M0.6 4h6.6l-3.3 3z" fill="#000"/></svg>
<svg class="r" style="left:5px;top:77px" width="16" height="16"><use href="#home"/></svg>
<svg class="r" style="left:65px;top:81px" width="23" height="11"><use href="#tabxx"/></svg>
<svg class="r" style="left:99px;top:78px" width="16" height="16"><use href="#tdef"/></svg>
<svg class="r" style="left:219px;top:82px" width="12" height="12"><use href="#tabx"/></svg>
<svg class="r" style="left:240px;top:78px" width="16" height="16"><use href="#tgrid"/></svg>
<svg class="r" style="left:353px;top:82px" width="12" height="12"><use href="#tabx"/></svg>
<svg class="r" style="left:10px;top:113px" width="24" height="22"><use href="#sFoldDb"/></svg>
<svg class="r" style="left:46px;top:113px" width="24" height="22"><use href="#sFoldStar"/></svg>
<svg class="r" style="left:587px;top:113px" width="24" height="23"><use href="#sDbRefresh"/></svg>
<svg class="r" style="left:16px;top:175px" width="17" height="16"><use href="#schema"/></svg>
<svg class="r" style="left:16px;top:196px" width="17" height="16"><use href="#tdef"/></svg>
<svg class="r" style="left:16px;top:217px" width="17" height="16"><use href="#views"/></svg>
<svg class="r" style="left:16px;top:238px" width="17" height="16"><use href="#matviews"/></svg>
<svg class="r" style="left:16px;top:259px" width="17" height="16"><use href="#proc"/></svg>
<svg class="r" style="left:16px;top:280px" width="18" height="18"><use href="#fx"/></svg>
<svg class="r" style="left:16px;top:301px" width="17" height="16"><use href="#seq"/></svg>
<svg class="r" style="left:196px;top:195px" width="17" height="16"><use href="#stack"/></svg>
<svg class="r" style="left:196px;top:216px" width="17" height="16"><use href="#stack"/></svg>
<svg class="r" style="left:196px;top:237px" width="17" height="16"><use href="#stack"/></svg>
<div class="t" style="left:97px;top:174.92px;font-family:'Liberation Mono', monospace;font-size:7.3px;line-height:8.270px;color:#777;letter-spacing:-0.05px;-webkit-text-stroke:0.3px #888;">DIFF ONLY</div>
<svg class="r" style="left:649px;top:113px" width="24" height="22"><use href="#sFoldDb"/></svg>
<svg class="r" style="left:685px;top:113px" width="24" height="22"><use href="#sFoldStar"/></svg>
<svg class="r" style="left:1226px;top:113px" width="24" height="23"><use href="#sDbRefresh"/></svg>
<svg class="r" style="left:655px;top:175px" width="17" height="16"><use href="#schema"/></svg>
<svg class="r" style="left:655px;top:196px" width="17" height="16"><use href="#tdef"/></svg>
<svg class="r" style="left:655px;top:217px" width="17" height="16"><use href="#views"/></svg>
<svg class="r" style="left:655px;top:238px" width="17" height="16"><use href="#matviews"/></svg>
<svg class="r" style="left:655px;top:259px" width="17" height="16"><use href="#proc"/></svg>
<svg class="r" style="left:655px;top:280px" width="18" height="18"><use href="#fx"/></svg>
<svg class="r" style="left:655px;top:301px" width="17" height="16"><use href="#seq"/></svg>
<svg class="r" style="left:835px;top:195px" width="17" height="16"><use href="#stack"/></svg>
<svg class="r" style="left:835px;top:216px" width="17" height="16"><use href="#stack"/></svg>
<svg class="r" style="left:835px;top:237px" width="17" height="16"><use href="#stack"/></svg>
<div class="t" style="left:736px;top:174.92px;font-family:'Liberation Mono', monospace;font-size:7.3px;line-height:8.270px;color:#777;letter-spacing:-0.05px;-webkit-text-stroke:0.3px #888;">DIFF ONLY</div>
<svg class="r" style="left:72px;top:346px" width="16" height="14"><use href="#rf1"/></svg>
<svg class="r" style="left:94px;top:346px" width="16" height="14"><use href="#rf2"/></svg>
<svg class="r" style="left:646px;top:346px" width="16" height="14"><use href="#rf1"/></svg>
<svg class="r" style="left:668px;top:346px" width="16" height="14"><use href="#rf2"/></svg>
<svg class="r" style="left:1198px;top:346px" width="17" height="15"><use href="#rfBoth"/></svg>
<svg class="r" style="left:1227px;top:345px" width="17" height="16"><use href="#redx"/></svg>
<svg class="r" style="left:72px;top:365px" width="16" height="14"><use href="#rf1"/></svg>
<svg class="r" style="left:94px;top:365px" width="16" height="14"><use href="#rf2"/></svg>
<svg class="r" style="left:646px;top:365px" width="16" height="14"><use href="#rf1"/></svg>
<svg class="r" style="left:668px;top:365px" width="16" height="14"><use href="#rf2"/></svg>
<svg class="r" style="left:1198px;top:365px" width="17" height="15"><use href="#rfBoth"/></svg>
<svg class="r" style="left:1227px;top:364px" width="17" height="16"><use href="#redx"/></svg>
<svg class="r" style="left:72px;top:384px" width="16" height="14"><use href="#rf1"/></svg>
<svg class="r" style="left:94px;top:384px" width="16" height="14"><use href="#rf2"/></svg>
<svg class="r" style="left:646px;top:384px" width="16" height="14"><use href="#rf1"/></svg>
<svg class="r" style="left:668px;top:384px" width="16" height="14"><use href="#rf2"/></svg>
<svg class="r" style="left:1198px;top:384px" width="17" height="15"><use href="#rfBoth"/></svg>
<svg class="r" style="left:1227px;top:383px" width="17" height="16"><use href="#redx"/></svg>
<svg class="r" style="left:7px;top:318px" width="19" height="19"><use href="#caret"/></svg>
<svg class="r" style="left:7px;top:407px" width="19" height="19"><use href="#caret"/></svg>
<svg class="r" style="left:148px;top:409px" width="16" height="16"><use href="#plus"/></svg>
<svg class="r" style="left:183px;top:408px" width="17" height="16"><use href="#foldPlus"/></svg>
<svg class="r" style="left:1094px;top:452px" width="15" height="15" viewBox="0 0 15 15"><rect x="1.5" y="1.5" width="12" height="12" fill="#fff" stroke="#333" stroke-width="1"/><path d="M4 7.5l2.5 3 5-7" fill="none" stroke="#111" stroke-width="1.8"/></svg>
<svg class="r" style="left:1094px;top:473px" width="15" height="15" viewBox="0 0 15 15"><rect x="1.5" y="1.5" width="12" height="12" fill="#fff" stroke="#333" stroke-width="1"/></svg>
<svg class="r" style="left:1172px;top:457px" width="9" height="9" viewBox="0 0 9 9"><circle cx="4.5" cy="4.5" r="4" fill="#6cbc22"/></svg>
<svg class="r" style="left:1172px;top:478px" width="9" height="9" viewBox="0 0 9 9"><circle cx="4.5" cy="4.5" r="4" fill="#dadada"/></svg>
<svg class="r" style="left:1197px;top:453px" width="18" height="16"><use href="#foldSearch"/></svg>
<svg class="r" style="left:1226px;top:453px" width="17" height="16"><use href="#redx"/></svg>
<svg class="r" style="left:1197px;top:474px" width="18" height="16"><use href="#foldSearch"/></svg>
<svg class="r" style="left:1226px;top:474px" width="17" height="16"><use href="#redx"/></svg>
<div class="r" style="left:0px;top:0px;width:1260px;height:1px;background:#5b5f63;"></div>
<div class="r" style="left:0px;top:0px;width:1px;height:500px;background:#5f6368;"></div>
<div class="r" style="left:1px;top:31px;width:1px;height:469px;background:#b8b8b8;"></div>
<div class="r" style="left:1259px;top:0px;width:1px;height:500px;background:#5f6368;"></div>
<div class="r" style="left:1258px;top:31px;width:1px;height:469px;background:#b8b8b8;"></div>
<div class="r" style="left:0px;top:498px;width:1260px;height:1px;background:#6a6a6a;"></div>
<div class="r" style="left:0px;top:499px;width:1260px;height:1px;background:#444444;"></div>
</body></html>
